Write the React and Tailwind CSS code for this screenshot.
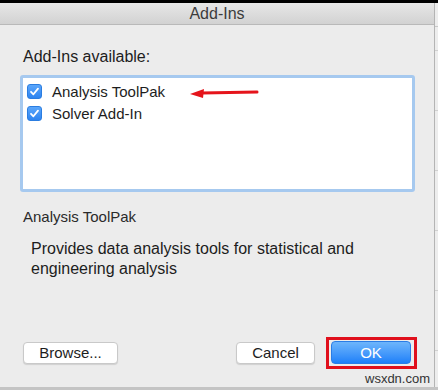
import React from "react";

function Check() {
  return (
    <div className="w-[15px] h-[15px] rounded-[3px] bg-gradient-to-b from-[#5aa6fb] to-[#2d84f0] border border-[#2b7de0] flex items-center justify-center shrink-0">
      <svg width="11" height="11" viewBox="0 0 11 11">
        <path d="M2 5.8 L4.4 8.3 L9 2.6" fill="none" stroke="white" strokeWidth="1.8" strokeLinecap="round" strokeLinejoin="round" />
      </svg>
    </div>
  );
}

export default function App() {
  return (
    <div className="relative w-[438px] h-[390px] bg-[#bdbdbd] flex flex-col overflow-hidden font-['Liberation_Sans',Arial,sans-serif] text-[#1d1d1d]">
      <div className="h-[3px] bg-black shrink-0" />
      <div className="flex h-[384px] shrink-0">
        <div className="w-[435px] flex flex-col bg-[#ececec] border-r border-[#b4b4b4]">
          <div className="h-[22px] shrink-0 bg-gradient-to-b from-[#e7e7e7] to-[#d2d2d2] border-b border-[#b9b9b9] flex items-center justify-center">
            <span className="text-[16px] leading-none text-[#3c3c3c]">Add-Ins</span>
          </div>
          <div className="flex flex-col flex-1 pl-[20px] pr-[19px]">
            <div className="mt-[24px] pl-[3px] text-[16px] leading-[16px]">Add-Ins available:</div>
            <div className="mt-[10px] h-[117px] border-[3px] border-[#a6c9ef] rounded-[3px] bg-white pt-[2px] pl-[4px]">
              <div className="h-[22px] flex items-center gap-[10px]">
                <Check />
                <span className="text-[15px] leading-none">Analysis ToolPak</span>
              </div>
              <div className="h-[22px] flex items-center gap-[10px]">
                <Check />
                <span className="text-[15px] leading-none">Solver Add-In</span>
              </div>
            </div>
            <div className="mt-[16px] pl-[3px] text-[15px] leading-[18px] text-[#2a2a2a]">Analysis ToolPak</div>
            <div className="mt-[13px] pl-[11px] text-[16px] leading-[20px] w-[360px]">
              Provides data analysis tools for statistical and engineering analysis
            </div>
            <div className="flex-1" />
            <div className="flex items-center mb-[23px] pl-[3px]">
              <button className="w-[95px] h-[22px] bg-white border border-[#c9c9c9] rounded-[4px] shadow-[0_1px_1px_rgba(0,0,0,0.12)] text-[15px] leading-none text-[#1d1d1d]">
                Browse...
              </button>
              <div className="flex-1" />
              <button className="w-[79px] h-[22px] bg-white border border-[#c9c9c9] rounded-[4px] shadow-[0_1px_1px_rgba(0,0,0,0.12)] text-[15px] leading-none text-[#1d1d1d]">
                Cancel
              </button>
              <button className="ml-[16px] mr-[4px] w-[80px] h-[23px] bg-gradient-to-b from-[#6db5fb] to-[#1c80f9] border border-[#2a7de6] rounded-[4px] text-[15px] leading-none text-white">
                OK
              </button>
            </div>
          </div>
        </div>
        <div className="flex-1 bg-[#ededed] flex flex-col">
          <div className="h-[24px] border-b border-[#c8c8c8]" />
          <div className="h-[24px] border-b border-[#d0d0d0]" />
          <div className="h-[60px] border-b border-[#d0d0d0]" />
          <div className="h-[60px] border-b border-[#d0d0d0]" />
          <div className="h-[60px] border-b border-[#d0d0d0]" />
          <div className="h-[60px] border-b border-[#d0d0d0]" />
          <div className="h-[60px] border-b border-[#d0d0d0]" />
        </div>
      </div>
      <div className="flex-1 bg-[#c4c4c4]" />

      {/* red arrow annotation */}
      <svg className="absolute left-[188px] top-[86px]" width="72" height="16" viewBox="0 0 72 16">
        <path d="M14 7 L69 6" stroke="#e5141b" strokeWidth="3" strokeLinecap="round" />
        <path d="M2 8 L16 3 L15 12 Z" fill="#e5141b" />
      </svg>

      {/* red highlight around OK */}
      <div className="absolute left-[326px] top-[337px] w-[91px] h-[32px] border-[3px] border-[#e0101c]" />

      {/* watermark */}
      <div className="absolute left-[365px] top-[372px] text-[13px] leading-[14px] text-[#333333]">wsxdn.com</div>
    </div>
  );
}
